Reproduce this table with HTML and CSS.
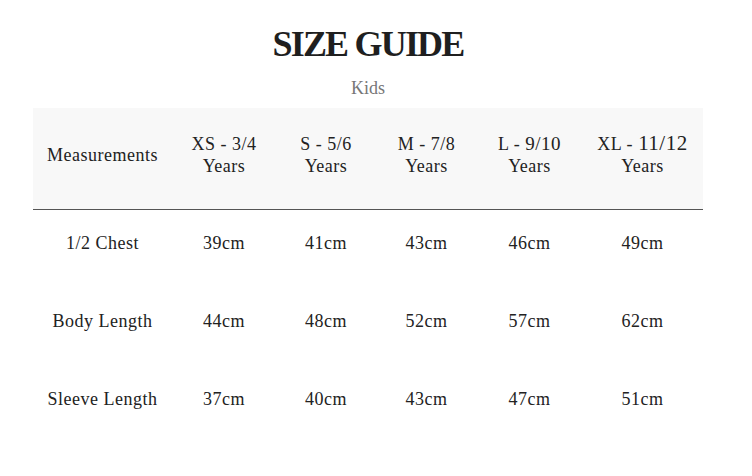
FILE: index.html
```html
<!DOCTYPE html>
<html lang="en">
<head>
<meta charset="utf-8">
<title>Size Guide</title>
<link rel="stylesheet" href="styles.css">
</head>
<body>
<main class="guide">
  <h1 class="title">SIZE GUIDE</h1>
  <p class="subtitle">Kids</p>
  <table class="sizes">
    <colgroup>
      <col class="c1"><col class="c2"><col class="c3"><col class="c4"><col class="c5"><col class="c6">
    </colgroup>
    <thead>
      <tr>
        <th>Measurements</th>
        <th>XS - 3/4<br>Years</th>
        <th>S - 5/6<br>Years</th>
        <th>M - 7/8<br>Years</th>
        <th>L - <span class="num">9/10</span><br>Years</th>
        <th>XL - <span class="num big">11/12</span><br>Years</th>
      </tr>
    </thead>
    <tbody>
      <tr><td>1/2 Chest</td><td>39cm</td><td>41cm</td><td>43cm</td><td>46cm</td><td>49cm</td></tr>
      <tr><td>Body Length</td><td>44cm</td><td>48cm</td><td>52cm</td><td>57cm</td><td>62cm</td></tr>
      <tr><td>Sleeve Length</td><td>37cm</td><td>40cm</td><td>43cm</td><td>47cm</td><td>51cm</td></tr>
    </tbody>
  </table>
</main>
</body>
</html>
```

FILE: styles.css
```css
html, body {
  margin: 0;
  padding: 0;
  background: #ffffff;
}

body {
  font-family: "Liberation Serif", "DejaVu Serif", serif;
  color: #222222;
}

.guide {
  width: 670px;
  margin: 0 0 0 33px;
  padding-top: 22px;
}

.title {
  margin: 0;
  font-size: 36px;
  line-height: 44px;
  font-weight: 700;
  letter-spacing: -1.8px;
  text-align: center;
  color: #1f1f1f;
}

.subtitle {
  margin: 11px 0 0;
  font-size: 18px;
  line-height: 22px;
  text-align: center;
  color: #777777;
}

.sizes {
  margin-top: 9px;
  width: 670px;
  table-layout: fixed;
  border-collapse: collapse;
  font-size: 18px;
  line-height: 22px;
  letter-spacing: 0.5px;
}

.c1 { width: 139px; }
.c2 { width: 104px; }
.c3 { width: 100px; }
.c4 { width: 101px; }
.c5 { width: 105px; }
.c6 { width: 121px; }

.sizes th {
  font-weight: 400;
  background: #f8f8f8;
  padding: 24px 0 32px;
  border-bottom: 1px solid #555555;
  text-align: center;
  vertical-align: middle;
}

.sizes td {
  padding: 22px 0 34px;
  text-align: center;
}

.num {
  font-size: 19px;
}

.num.big {
  font-size: 21px;
  letter-spacing: 0.5px;
}
```
